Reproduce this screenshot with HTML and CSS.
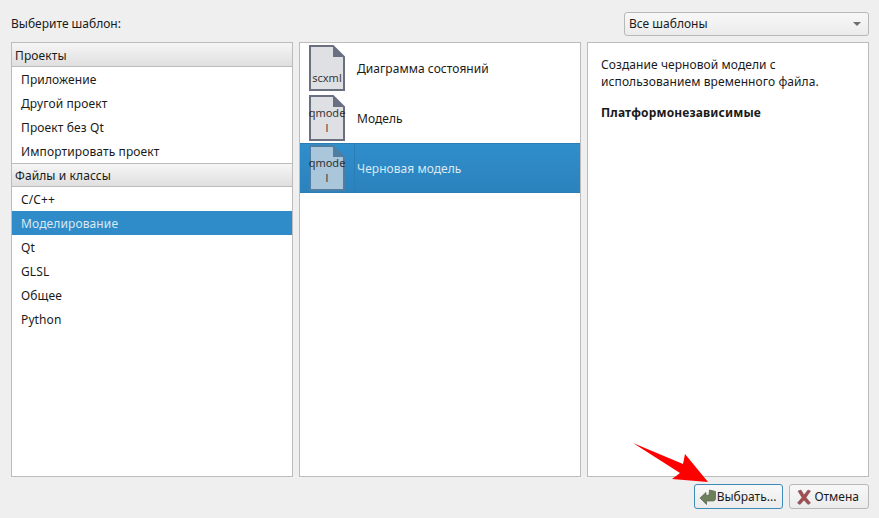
FILE: index.html
```html
<!DOCTYPE html>
<html lang="ru">
<head>
    <meta charset="UTF-8">
    <title>Новый файл</title>
    <link rel="stylesheet" href="styles.css">
</head>
<body>
    <div class="dialog">
        <div class="top-row">
            <span class="top-label">Выберите шаблон:</span>
            <div class="combo">
                <span>Все шаблоны</span>
                <span class="combo-arrow"></span>
            </div>
        </div>

        <div class="panels">
            <div class="panel categories">
                <div class="cat-header first">Проекты</div>
                <div class="cat-item">Приложение</div>
                <div class="cat-item">Другой проект</div>
                <div class="cat-item">Проект без Qt</div>
                <div class="cat-item">Импортировать проект</div>
                <div class="cat-header">Файлы и классы</div>
                <div class="cat-item">C/C++</div>
                <div class="cat-item selected">Моделирование</div>
                <div class="cat-item">Qt</div>
                <div class="cat-item">GLSL</div>
                <div class="cat-item">Общее</div>
                <div class="cat-item">Python</div>
            </div>

            <div class="panel templates">
                <div class="tpl-row">
                    <div class="tpl-icon">
                        <svg class="file-icon" viewBox="0 0 36 46" width="36" height="46">
                            <path d="M1 1H24L35 12V45H1Z" fill="#dfe0e4" stroke="#6b6f82" stroke-width="2"/>
                            <path d="M24 1L35 12H24Z" fill="#6b6f82"/>
                        </svg>
                        <span class="icon-text low">scxml</span>
                    </div>
                    <span class="tpl-name">Диаграмма состояний</span>
                </div>
                <div class="tpl-row">
                    <div class="tpl-icon">
                        <svg class="file-icon" viewBox="0 0 36 46" width="36" height="46">
                            <path d="M1 1H24L35 12V45H1Z" fill="#dfe0e4" stroke="#6b6f82" stroke-width="2"/>
                            <path d="M24 1L35 12H24Z" fill="#6b6f82"/>
                        </svg>
                        <span class="icon-text">qmode<br>l</span>
                    </div>
                    <span class="tpl-name">Модель</span>
                </div>
                <div class="tpl-row selected">
                    <div class="tpl-icon">
                        <svg class="file-icon" viewBox="0 0 36 46" width="36" height="46">
                            <path d="M1 1H24L35 12V45H1Z" fill="#a9c6da" stroke="#4f7ea4" stroke-width="2"/>
                            <path d="M24 1L35 12H24Z" fill="#4f7ea4"/>
                        </svg>
                        <span class="icon-text">qmode<br>l</span>
                    </div>
                    <span class="tpl-name">Черновая модель</span>
                </div>
            </div>

            <div class="panel details">
                <p>Создание черновой модели с использованием временного файла.</p>
                <p class="platform">Платформонезависимые</p>
            </div>
        </div>

        <div class="buttons">
            <button class="btn default">
                <svg viewBox="0 0 17 16" width="17" height="16">
                    <path d="M1 9L7 3.500V6.500L10 6L10.500 1L16.500 2.500V9.500C16.500 11 15.500 12 14 12H7.500V15.500Z" fill="#6e7f5c" stroke="#55624a" stroke-width="0.7" stroke-linejoin="round"/>
                </svg>
                Выбрать...
            </button>
            <button class="btn cancel">
                <svg viewBox="0 0 14 16" width="14" height="16">
                    <path d="M1 2L4 1L7 6L11 1L13.500 2L9 8.500L13.500 14L11 15.500L7 11L3 15.500L0.500 14L5 8.500Z" fill="#a64b50" stroke="#6e5a5c" stroke-width="0.6"/>
                </svg>
                Отмена
            </button>
        </div>

        <svg class="red-arrow" viewBox="0 0 90 50" width="90" height="50">
            <path d="M3 3L53 24L55 14L78 42L42 39L50 33Z" fill="#fe0000"/>
        </svg>
    </div>
</body>
</html>
```

FILE: styles.css
```css
* {
    box-sizing: border-box;
}
body {
    margin: 0;
    background-color: #efefef;
    font-family: "Noto Sans", sans-serif;
    font-size: 12px;
    color: #1a1a1a;
}
.dialog {
    position: relative;
    width: 879px;
    height: 518px;
    padding: 12px 10px 9px 11px;
    display: flex;
    flex-direction: column;
    overflow: hidden;
}
.top-row {
    display: flex;
    justify-content: space-between;
    align-items: center;
    height: 23px;
    padding-right: 1px;
}
.combo {
    width: 245px;
    height: 24px;
    margin-right: -1px;
    padding: 0 5px 0 4px;
    display: flex;
    justify-content: space-between;
    align-items: center;
    border: 1px solid #b8b8b8;
    border-radius: 3px;
    background: linear-gradient(#f8f8f8, #ebebeb);
}
.combo-arrow {
    width: 0;
    height: 0;
    margin-right: 2px;
    border-left: 4px solid transparent;
    border-right: 4px solid transparent;
    border-top: 4px solid #6e6e6e;
}
.panels {
    display: flex;
    gap: 6px;
    height: 435px;
    margin-top: 7px;
}
.panel {
    width: 282px;
    background: white;
    border: 1px solid #bcbcbc;
}
.cat-header {
    height: 24px;
    padding-left: 3px;
    line-height: 24px;
    letter-spacing: 0.1px;
    background: linear-gradient(#f6f6f6, #dfdfdf);
    border-top: 1px solid #bcbcbc;
    border-bottom: 1px solid #bcbcbc;
}
.cat-header.first {
    padding-top: 1px;
    border-top: none;
}
.cat-item {
    height: 24px;
    padding-left: 9px;
    line-height: 26px;
    letter-spacing: 0.12px;
}
.selected {
    color: #d9e8f2;
}
.cat-item.selected {
    background-color: #2f8cc8;
}
.tpl-row {
    height: 50px;
    padding-left: 9px;
    display: flex;
    align-items: center;
    gap: 12px;
}
.tpl-name {
    letter-spacing: 0.05px;
}
.tpl-row.selected {
    background: linear-gradient(#308ecb, #2b82bd);
    border-top: 1px solid #2a7db5;
    border-bottom: 1px solid #2a7db5;
}
.tpl-icon {
    position: relative;
    width: 36px;
    height: 46px;
}
.file-icon {
    display: block;
}
.icon-text {
    position: absolute;
    left: -2px;
    right: -2px;
    top: 10px;
    text-align: center;
    font-size: 11px;
    line-height: 15px;
    color: #1f1f1f;
    opacity: 0.9;
}
.icon-text.low {
    top: 25px;
}
.tpl-row.selected .tpl-icon::after {
    content: "";
    position: absolute;
    top: -2px;
    bottom: -2px;
    right: -10px;
    border-right: 1px solid #2a7db5;
}
.details {
    padding: 13px 13px;
    line-height: 17px;
    letter-spacing: 0.08px;
}
.details p {
    margin: 0 0 14px;
}
.platform {
    font-weight: bold;
    letter-spacing: 0.15px;
}
.buttons {
    display: flex;
    justify-content: flex-end;
    gap: 6px;
    margin-top: 7px;
}
.btn {
    height: 25px;
    padding: 0 6px 0 4px;
    display: flex;
    align-items: center;
    gap: 1px;
    border: 1px solid #b8b8b8;
    border-radius: 3px;
    background: linear-gradient(#f8f8f8, #ebebeb);
    font-family: inherit;
    font-size: 12px;
    color: #1a1a1a;
}
.btn.default {
    border-color: #3f8bb8;
}
.btn.cancel {
    padding: 0 9px 0 7px;
    gap: 3px;
}
.red-arrow {
    position: absolute;
    left: 630px;
    top: 440px;
}
```
